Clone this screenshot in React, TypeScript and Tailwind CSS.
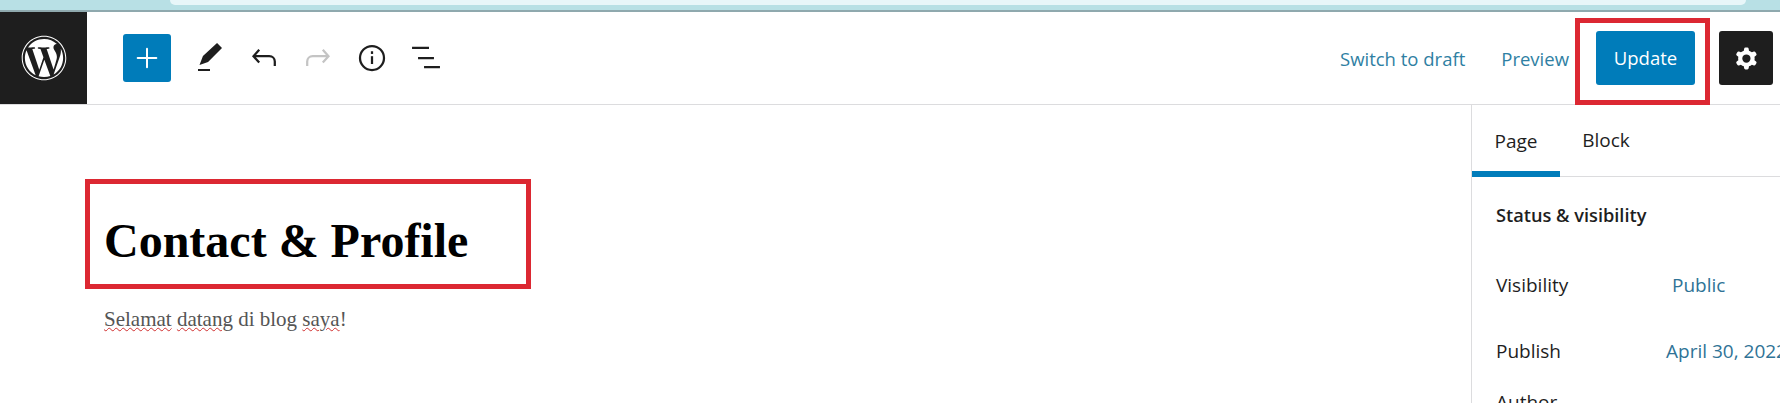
import { Plus } from 'lucide-react';
import { FaWordpress } from 'react-icons/fa';

const sans = 'font-["Open_Sans",sans-serif]';

const IconButton = ({ children }: { children: React.ReactNode }) => (
  <div className="flex items-center justify-center w-[54px] h-[54px]">{children}</div>
);

const PenIcon = () => (
  <svg viewBox="0 0 24 24" className="w-9 h-9" fill="#1e1e1e">
    <path d="M5 16.700 7.300 10.700 16.700 2 20 5.300 10.700 14.700zM4 19.300h8v1.400H4z" />
  </svg>
);

const UndoIcon = ({ color, flip }: { color: string; flip?: boolean }) => (
  <svg viewBox="0 0 24 24" className={flip ? 'w-9 h-9 -scale-x-100' : 'w-9 h-9'} fill="none" stroke={color} strokeWidth="1.5">
    <path d="M8.800 6.500 5 10.800l3.800 4.200M5 10.800h10.500c2.200 0 3.700 1.500 3.700 3.600v3" />
  </svg>
);

const InfoIcon = () => (
  <svg viewBox="0 0 24 24" className="w-9 h-9" fill="none" stroke="#1e1e1e" strokeWidth="1.500">
    <circle cx="12" cy="12" r="8" />
    <path d="M12 10.800v5.200" />
    <path d="M12 7.500v1.800" />
  </svg>
);

const ListIcon = () => (
  <svg viewBox="0 0 24 24" className="w-9 h-9" fill="none" stroke="#1e1e1e" strokeWidth="1.500">
    <path d="M2.700 5.300H14M6.700 12h10.600M10.700 18h10.600" />
  </svg>
);

const GearIcon = () => (
  <svg viewBox="0 0 24 24" className="w-[33px] h-[33px]" fill="#fff">
    <path
      fillRule="evenodd"
      clipRule="evenodd"
      d="M10.289 4.836A1 1 0 0111.275 4h1.306a1 1 0 01.987.836l.244 1.466c.787.26 1.503.679 2.108 1.218l1.393-.522a1 1 0 011.216.437l.653 1.13a1 1 0 01-.23 1.273l-1.148.944a6.025 6.025 0 010 2.435l1.149.946a1 1 0 01.23 1.272l-.653 1.13a1 1 0 01-1.216.437l-1.394-.522c-.605.54-1.32.958-2.108 1.218l-.244 1.466a1 1 0 01-.987.836h-1.306a1 1 0 01-.986-.836l-.244-1.466a5.995 5.995 0 01-2.108-1.218l-1.394.522a1 1 0 01-1.217-.436l-.653-1.131a1 1 0 01.23-1.272l1.149-.946a6.026 6.026 0 010-2.435l-1.148-.944a1 1 0 01-.23-1.272l.653-1.131a1 1 0 011.217-.437l1.393.522a5.994 5.994 0 012.108-1.218l.244-1.466zM14.929 12a3 3 0 11-6 0 3 3 0 016 0z"
    />
  </svg>
);

const MetaRow = ({ label, value, indent }: { label: string; value: string; indent: string }) => (
  <div className="flex items-center h-[66px]">
    <span className="w-[170px] shrink-0 text-[19px] text-[#1e1e1e]">{label}</span>
    <span className={`whitespace-nowrap text-[19px] text-[#2f7396] ${indent}`}>{value}</span>
  </div>
);

export default function App() {
  return (
    <div className={`relative w-[1780px] h-[403px] overflow-hidden bg-white ${sans}`}>
      {/* Browser chrome strip */}
      <div className="h-[12px] bg-[#b8e0e5] border-b-2 border-[#8fa9ae] px-[170px]">
        <div className="h-[5px] w-[1576px] bg-[#e8f6f9] rounded-b-lg" />
      </div>

      {/* Editor header */}
      <header className="flex items-center h-[93px] border-b border-[#dcdcde]">
        <div className="flex items-center justify-center w-[87px] h-full bg-[#1e1e1e]">
          <FaWordpress className="w-[46px] h-[46px] text-white" />
        </div>
        <div className="flex items-center ml-[36px]">
          <div className="flex items-center justify-center w-[48px] h-[48px] mr-[12px] rounded-[3px] bg-[#007cba]">
            <Plus className="w-8 h-8 text-white" strokeWidth={1.5} />
          </div>
          <IconButton><PenIcon /></IconButton>
          <IconButton><UndoIcon color="#1e1e1e" /></IconButton>
          <IconButton><UndoIcon color="#c4c4c4" flip /></IconButton>
          <IconButton><InfoIcon /></IconButton>
          <IconButton><ListIcon /></IconButton>
        </div>
        <div className="flex items-center ml-auto pr-[7px]">
          <span className="pt-[2px] text-[18.500px] text-[#2f7fa3]">Switch to draft</span>
          <span className="ml-[36px] pt-[2px] text-[18.500px] text-[#2f7fa3]">Preview</span>
          <button className="flex items-center justify-center w-[99px] h-[54px] ml-[27px] rounded-[3px] bg-[#007cba] text-[18.500px] text-white">
            Update
          </button>
          <div className="flex items-center justify-center w-[54px] h-[54px] ml-[24px] rounded-[3px] bg-[#1e1e1e]">
            <GearIcon />
          </div>
        </div>
      </header>

      <div className="flex h-[298px]">
        {/* Post content */}
        <main className="flex-1 pl-[104px] pt-[108px] font-['Liberation_Serif',serif]">
          <h1 className="text-[48px] font-bold leading-[56px] text-black whitespace-nowrap">Contact &amp; Profile</h1>
          <p className="mt-[36px] text-[21px] leading-[28px] text-[#555]">
            <span className="underline decoration-wavy decoration-[#d03030] decoration-1">Selamat</span>{' '}
            <span className="underline decoration-wavy decoration-[#d03030] decoration-1">datang</span> di blog{' '}
            <span className="underline decoration-wavy decoration-[#d03030] decoration-1">saya</span>!
          </p>
        </main>

        {/* Settings sidebar */}
        <aside className="w-[309px] border-l border-[#dcdcde]">
          <div className="flex h-[72px] border-b border-[#dcdcde]">
            <div className="flex items-center justify-center w-[88px] pt-[6px] border-b-[6px] border-[#007cba] -mb-px text-[19px] font-medium text-[#1e1e1e]">Page</div>
            <div className="flex items-center justify-center ml-[1px] w-[90px] text-[19px] font-medium text-[#1e1e1e]">Block</div>
          </div>
          <div className="pl-[24px] pt-[26px]">
            <div className="text-[18.200px] font-semibold leading-[24px] text-[#1e1e1e]">Status &amp; visibility</div>
            <div className="mt-[25px]">
              <MetaRow label="Visibility" value="Public" indent="ml-[6px]" />
              <MetaRow label="Publish" value="April 30, 2022" indent="ml-[0px]" />
            </div>
            <div className="pt-[4px] text-[19px] text-[#1e1e1e]">Author</div>
          </div>
        </aside>
      </div>

      {/* Red annotation boxes */}
      <div className="absolute left-[85px] top-[179px] w-[446px] h-[110px] border-[5px] border-[#dc2832]" />
      <div className="absolute left-[1575px] top-[18px] w-[135px] h-[87px] border-[5px] border-[#dc2832]" />
    </div>
  );
}
